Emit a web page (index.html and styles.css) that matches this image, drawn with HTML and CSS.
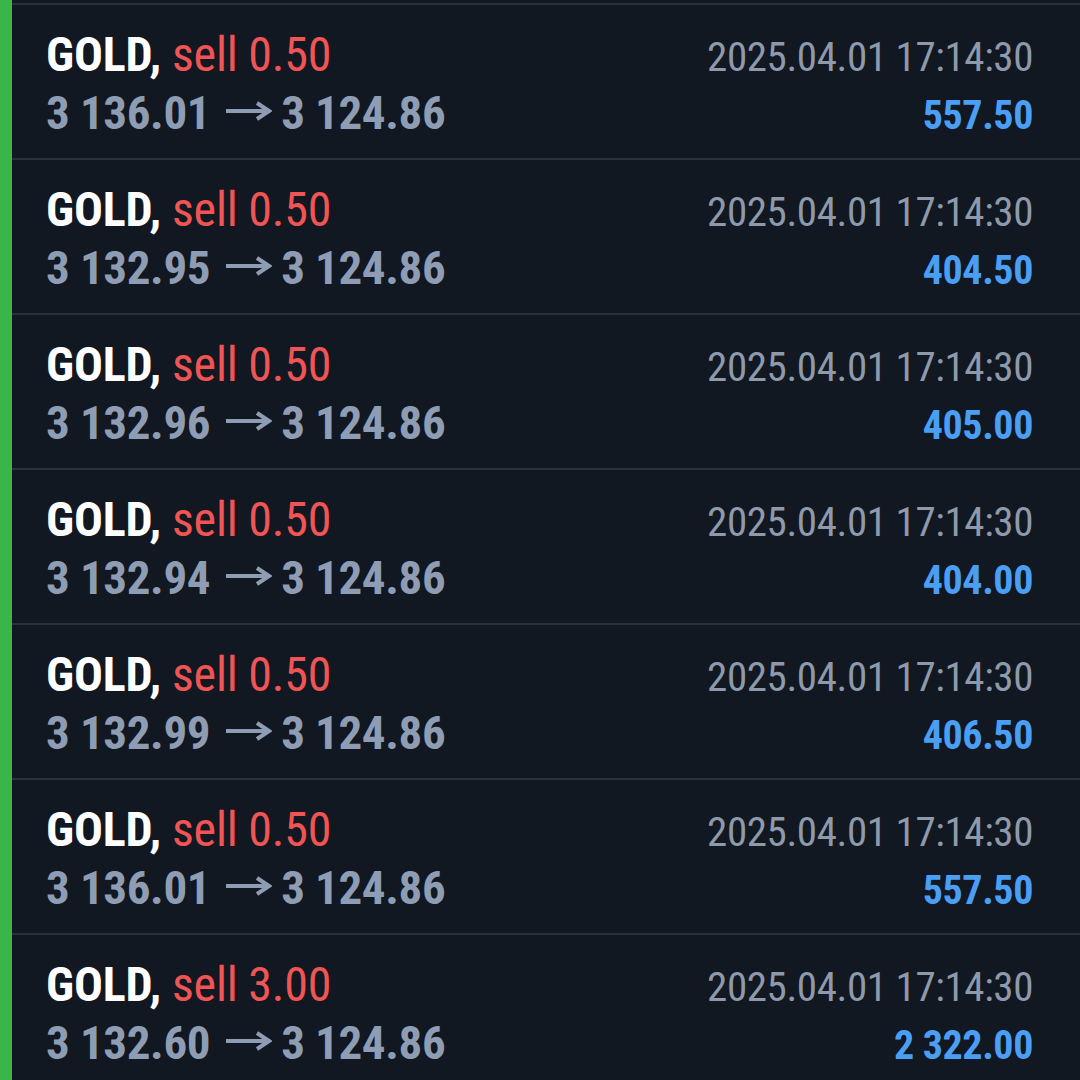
FILE: index.html
```html
<!DOCTYPE html>
<html lang="en">
<head>
  <meta charset="UTF-8" />
  <meta name="viewport" content="width=device-width, initial-scale=1.0" />
  <title>History</title>
  <link rel="stylesheet" href="styles.css">
</head>
<body>
  <div class="history">
    <div class="deal">
      <div class="line">
        <span class="title"><b class="symbol">GOLD,</b> <span class="sell">sell 0.50</span></span>
        <span class="time">2025.04.01 17:14:30</span>
      </div>
      <div class="line">
        <span class="prices">3 136.01 <svg class="arrow" viewBox="0 0 46 20"><path d="M0 10H43M31 2L43 10L31 18"/></svg> 3 124.86</span>
        <span class="profit">557.50</span>
      </div>
    </div>
    <div class="deal">
      <div class="line">
        <span class="title"><b class="symbol">GOLD,</b> <span class="sell">sell 0.50</span></span>
        <span class="time">2025.04.01 17:14:30</span>
      </div>
      <div class="line">
        <span class="prices">3 132.95 <svg class="arrow" viewBox="0 0 46 20"><path d="M0 10H43M31 2L43 10L31 18"/></svg> 3 124.86</span>
        <span class="profit">404.50</span>
      </div>
    </div>
    <div class="deal">
      <div class="line">
        <span class="title"><b class="symbol">GOLD,</b> <span class="sell">sell 0.50</span></span>
        <span class="time">2025.04.01 17:14:30</span>
      </div>
      <div class="line">
        <span class="prices">3 132.96 <svg class="arrow" viewBox="0 0 46 20"><path d="M0 10H43M31 2L43 10L31 18"/></svg> 3 124.86</span>
        <span class="profit">405.00</span>
      </div>
    </div>
    <div class="deal">
      <div class="line">
        <span class="title"><b class="symbol">GOLD,</b> <span class="sell">sell 0.50</span></span>
        <span class="time">2025.04.01 17:14:30</span>
      </div>
      <div class="line">
        <span class="prices">3 132.94 <svg class="arrow" viewBox="0 0 46 20"><path d="M0 10H43M31 2L43 10L31 18"/></svg> 3 124.86</span>
        <span class="profit">404.00</span>
      </div>
    </div>
    <div class="deal">
      <div class="line">
        <span class="title"><b class="symbol">GOLD,</b> <span class="sell">sell 0.50</span></span>
        <span class="time">2025.04.01 17:14:30</span>
      </div>
      <div class="line">
        <span class="prices">3 132.99 <svg class="arrow" viewBox="0 0 46 20"><path d="M0 10H43M31 2L43 10L31 18"/></svg> 3 124.86</span>
        <span class="profit">406.50</span>
      </div>
    </div>
    <div class="deal">
      <div class="line">
        <span class="title"><b class="symbol">GOLD,</b> <span class="sell">sell 0.50</span></span>
        <span class="time">2025.04.01 17:14:30</span>
      </div>
      <div class="line">
        <span class="prices">3 136.01 <svg class="arrow" viewBox="0 0 46 20"><path d="M0 10H43M31 2L43 10L31 18"/></svg> 3 124.86</span>
        <span class="profit">557.50</span>
      </div>
    </div>
    <div class="deal">
      <div class="line">
        <span class="title"><b class="symbol">GOLD,</b> <span class="sell">sell 3.00</span></span>
        <span class="time">2025.04.01 17:14:30</span>
      </div>
      <div class="line">
        <span class="prices">3 132.60 <svg class="arrow" viewBox="0 0 46 20"><path d="M0 10H43M31 2L43 10L31 18"/></svg> 3 124.86</span>
        <span class="profit">2 322.00</span>
      </div>
    </div>
  </div>
</body>
</html>
```

FILE: styles.css
```css
body {
  margin: 0;
  background-color: #111821;
  font-family: "Roboto Condensed", Roboto, sans-serif;
  font-stretch: 80%;
  height: 1080px;
  overflow: hidden;
}

.history {
  border-left: 12px solid #39b54a;
  padding-top: 3px;
  height: 1080px;
}

.deal {
  border-top: 2px solid #2a313b;
  height: 131px;
  padding: 22px 47px 0 34px;
}

.line {
  display: flex;
  justify-content: space-between;
  align-items: baseline;
  line-height: 55px;
}

.title {
  font-size: 48px;
  letter-spacing: -0.2px;
}

.symbol {
  color: #ffffff;
  font-weight: 700;
}

.sell {
  color: #f05454;
}

.prices {
  font-size: 47px;
  font-weight: 700;
  letter-spacing: -0.35px;
  color: #8e9db3;
}

.arrow {
  width: 46px;
  height: 20px;
  margin: 0 -1px 0 5px;
  vertical-align: 8px;
  fill: none;
  stroke: #8e9db3;
  stroke-width: 4;
}

.time {
  font-size: 41px;
  letter-spacing: -0.4px;
  color: #8e9aab;
}

.profit {
  font-size: 40px;
  font-weight: 700;
  letter-spacing: -0.4px;
  color: #4a9ff5;
}
```
